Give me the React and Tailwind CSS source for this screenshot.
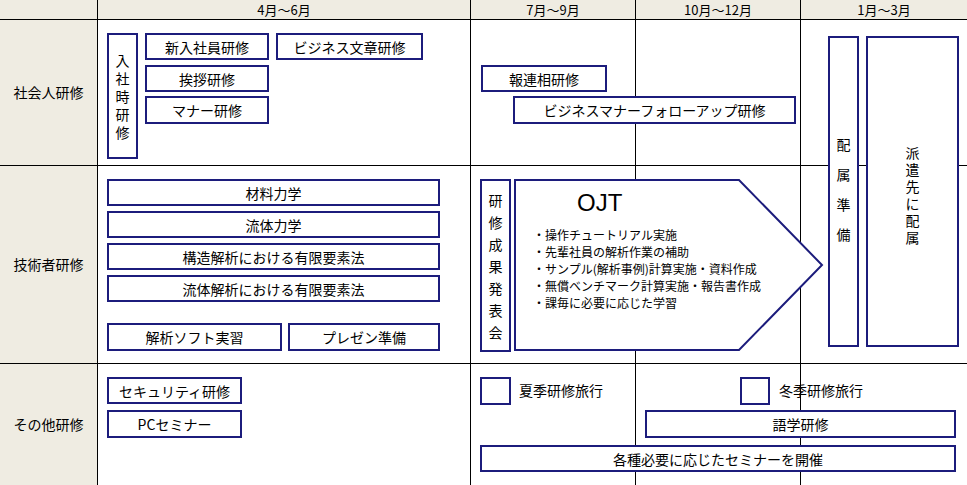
import React from 'react';

const font = { fontFamily: '"Noto Sans CJK JP", "Liberation Sans", sans-serif' };

const Box = ({ x, y, w, h, children, className = '' }) => (
  <div
    className={`absolute flex items-center justify-center border-2 border-[#1c1c7c] bg-white text-[14px] leading-none text-black ${className}`}
    style={{ left: x, top: y, width: w, height: h }}
  >
    {children}
  </div>
);

const VBox = ({ x, y, w, h, text, gap = 'gap-[4px]', justify = 'justify-center' }) => (
  <Box x={x} y={y} w={w} h={h} className={`flex-col ${justify} ${gap}`}>
    {text.split('').map((c, i) => <span key={i} className="leading-[16px]">{c}</span>)}
  </Box>
);

export default function App() {
  return (
    <div className="relative h-[485px] w-[967px] overflow-hidden bg-white text-[14px] text-black" style={font}>
      <div className="grid h-full grid-cols-[98px_373px_165px_165px_166px] grid-rows-[20px_146px_198px_121px]">
        <div className="border-b border-r border-black bg-[#efece2]" />
        <div className="flex items-center justify-center border-b border-r border-black bg-[#efece2] text-[13px]">4月～6月</div>
        <div className="flex items-center justify-center border-b border-r border-black bg-[#efece2] text-[13px]">7月～9月</div>
        <div className="flex items-center justify-center border-b border-r border-black bg-[#efece2] text-[13px]">10月～12月</div>
        <div className="flex items-center justify-center border-b border-black bg-[#efece2] text-[13px]">1月～3月</div>
        {['社会人研修', '技術者研修', 'その他研修'].map((t, r) => (
          <React.Fragment key={t}>
            <div className={`flex items-center justify-center border-r border-black bg-[#efece2] ${r < 2 ? 'border-b' : ''}`}>{t}</div>
            <div className={`border-r border-black ${r < 2 ? 'border-b' : ''}`} />
            <div className={`border-r border-black ${r < 2 ? 'border-b' : ''}`} />
            <div className={`border-r border-black ${r < 2 ? 'border-b' : ''}`} />
            <div className={`border-black ${r < 2 ? 'border-b' : ''}`} />
          </React.Fragment>
        ))}
      </div>

      {/* 社会人研修 */}
      <VBox x={107} y={33} w={31} h={126} text="入社時研修" gap="gap-[2px]" />
      <Box x={145} y={33} w={124} h={27}>新入社員研修</Box>
      <Box x={276} y={33} w={147} h={27}>ビジネス文章研修</Box>
      <Box x={145} y={65} w={124} h={27}>挨拶研修</Box>
      <Box x={145} y={96} w={124} h={28}>マナー研修</Box>
      <Box x={481} y={65} w={126} h={27}>報連相研修</Box>
      <Box x={513} y={96} w={283} h={28}>ビジネスマナーフォローアップ研修</Box>
      <VBox x={828} y={36} w={31} h={311} text="配属準備" gap="gap-[14px]" justify="justify-start pt-[98px]" />
      <VBox x={866} y={36} w={93} h={311} text="派遣先に配属" gap="gap-[1px]" justify="justify-start pt-[106px]" />

      {/* 技術者研修 */}
      <Box x={107} y={179} w={333} h={27}>材料力学</Box>
      <Box x={107} y={211} w={333} h={27}>流体力学</Box>
      <Box x={107} y={243} w={333} h={27}>構造解析における有限要素法</Box>
      <Box x={107} y={275} w={333} h={27}>流体解析における有限要素法</Box>
      <Box x={107} y={323} w={175} h={28}>解析ソフト実習</Box>
      <Box x={288} y={323} w={152} h={28}>プレゼン準備</Box>
      <VBox x={480} y={179} w={31} h={173} text="研修成果発表会" gap="gap-[6px]" />

      <div className="absolute" style={{ left: 513, top: 179, width: 312, height: 173 }}>
        <svg width="312" height="173" className="absolute inset-0">
          <polygon points="2,1 226,1 309,86 226,171 2,171" fill="white" stroke="#1c1c7c" strokeWidth="2" />
        </svg>
        <div className="relative pl-[20px] pt-[12px]">
          <div className="pl-[44px] text-[24px] leading-none" style={{ fontFamily: '"Liberation Sans", sans-serif' }}>OJT</div>
          <div className="mt-[12px] flex flex-col gap-[1px] text-[12px] leading-[16px]">
            <span>・操作チュートリアル実施</span>
            <span>・先輩社員の解析作業の補助</span>
            <span>・サンプル(解析事例)計算実施・資料作成</span>
            <span>・無償ベンチマーク計算実施・報告書作成</span>
            <span>・課毎に必要に応じた学習</span>
          </div>
        </div>
      </div>

      {/* その他研修 */}
      <Box x={107} y={377} w={135} h={27}>セキュリティ研修</Box>
      <Box x={107} y={410} w={135} h={28}>PCセミナー</Box>
      <Box x={480} y={377} w={31} h={28} />
      <div className="absolute text-[14px]" style={{ left: 519, top: 380 }}>夏季研修旅行</div>
      <Box x={740} y={377} w={30} h={28} />
      <div className="absolute text-[14px]" style={{ left: 779, top: 380 }}>冬季研修旅行</div>
      <Box x={645} y={410} w={311} h={28}>語学研修</Box>
      <Box x={480} y={445} w={476} h={27}>各種必要に応じたセミナーを開催</Box>
    </div>
  );
}
